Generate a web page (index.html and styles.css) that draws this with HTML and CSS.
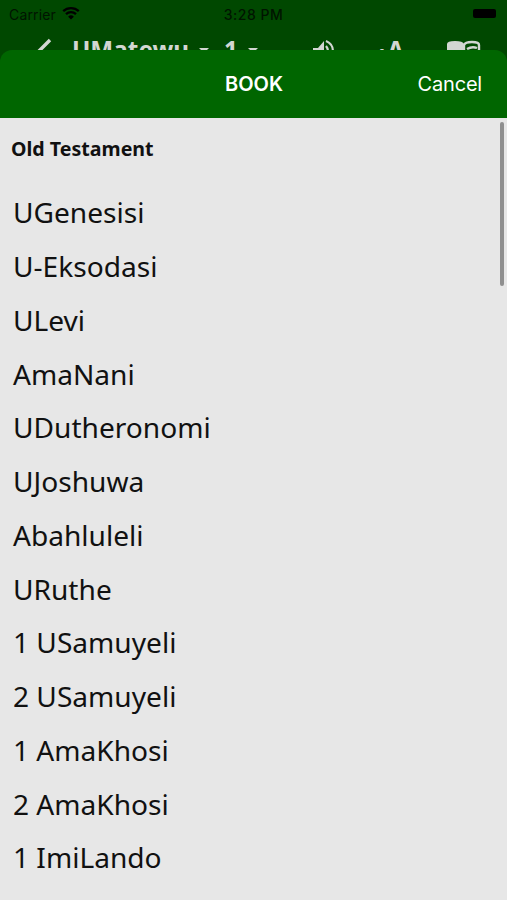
FILE: index.html
```html
<!DOCTYPE html>
<html lang="nd">

<head>
    <meta charset="UTF-8">
    <meta name="viewport" content="width=device-width, initial-scale=1.0">
    <title>Book</title>
    <link rel="stylesheet" href="styles.css">
</head>

<body>

    <div class="status">
        <div class="carrier">
            <span>Carrier</span>
            <svg class="wifi" viewBox="0 0 18 14" width="18" height="14">
                <path d="M1.2 5.2a11.2 11.2 0 0 1 15.6 0M4 8.2a7.2 7.2 0 0 1 10 0" fill="none" stroke="#000" stroke-width="2.3" />
                <path d="M9 13.6L6.1 10.7a4.2 4.2 0 0 1 5.8 0z" />
            </svg>
        </div>
        <span class="time">3:28 PM</span>
        <span class="battery"></span>
    </div>

    <div class="toolbar">
        <svg class="back" viewBox="0 0 16 26" width="16" height="26">
            <path d="M14 2L3 13l11 11" fill="none" stroke="#d2d6d2" stroke-width="3.4" />
        </svg>
        <span class="name">UMatewu</span>
        <span class="arrow"></span>
        <span class="chapter">1</span>
        <span class="arrow"></span>
        <svg class="sound" viewBox="0 0 24 24" width="24" height="24">
            <path d="M1 9v7h5l6 6V2L6 9z" />
            <path d="M14 2q7 3 7 10t-7 10M14 7q4 5 0 10" fill="none" stroke="#d2d6d2" stroke-width="2.2" />
        </svg>
        <span class="size"><small>A</small>A</span>
        <svg class="reader" viewBox="0 0 34 26" width="34" height="26">
            <path d="M0 4q0-3 8-3t9 3v21q-9-5-17 0z" />
            <path d="M17 5q1-3 8-3t7 3v19q-8-4-15 0zM20 9q5-3 10-1M20 15q5-3 10-1" fill="none" stroke="#d2d6d2" stroke-width="2.4" />
        </svg>
    </div>

    <div class="sheet">
        <div class="header">
            <h1>BOOK</h1>
            <button type="button">Cancel</button>
        </div>

        <div class="content">
            <h2>Old Testament</h2>
            <ul class="books">
                <li>UGenesisi</li>
                <li>U-Eksodasi</li>
                <li>ULevi</li>
                <li>AmaNani</li>
                <li>UDutheronomi</li>
                <li>UJoshuwa</li>
                <li>Abahluleli</li>
                <li>URuthe</li>
                <li>1 USamuyeli</li>
                <li>2 USamuyeli</li>
                <li>1 AmaKhosi</li>
                <li>2 AmaKhosi</li>
                <li>1 ImiLando</li>
            </ul>
            <div class="scrollbar"></div>
        </div>
    </div>

</body>

</html>
```

FILE: styles.css
```css
* {
    box-sizing: border-box;
    margin: 0;
    padding: 0;
}

body {
    display: flex;
    flex-direction: column;
    height: 900px;
    overflow: hidden;
    background-color: #004800;
    font-family: "Noto Sans", sans-serif;
}

/* status bar */

.status {
    display: grid;
    grid-template-columns: 1fr auto 1fr;
    align-items: center;
    height: 28px;
    padding: 0 11px 0 9px;
    font-family: Inter, sans-serif;
    font-size: 14px;
    color: #001400;
}

.carrier {
    display: flex;
    align-items: center;
    gap: 6px;
    letter-spacing: 0.15px;
}

.wifi {
    margin-top: -2px;
}

.time {
    font-weight: 500;
    font-size: 14px;
    letter-spacing: 0.5px;
    padding-left: 2px;
}

.battery {
    justify-self: end;
    width: 23px;
    height: 9px;
    margin-top: -1px;
    border-radius: 2px;
    background-color: #000;
}

/* toolbar, half hidden behind the sheet */

.toolbar {
    display: flex;
    align-items: flex-start;
    height: 44px;
    padding: 10px 26px 0 36px;
    color: #d2d6d2;
    fill: #d2d6d2;
    font-size: 24.3px;
    font-weight: bold;
    line-height: 24px;
}

.name {
    margin-left: 20px;
}

.arrow {
    margin: 10px 0 0 10px;
    border: 5px solid transparent;
    border-top-color: #d2d6d2;
    border-bottom: 0;
}

.chapter {
    margin-left: 15px;
}

.sound {
    margin: 1px 0 0 54px;
}

.size {
    margin-left: auto;
}

.size small {
    font-size: 15px;
}

.reader {
    margin: 2px 0 0 43px;
}

/* book sheet */

.sheet {
    flex: 1;
    display: flex;
    flex-direction: column;
    margin-top: -22px;
    overflow: hidden;
    position: relative;
    border-radius: 12px 12px 0 0;
    background-color: #006600;
}

.header {
    display: grid;
    grid-template-columns: 1fr auto 1fr;
    align-items: center;
    height: 68px;
    padding: 0 25px;
    color: #fff;
    font-family: Inter, sans-serif;
}

.header h1 {
    grid-column: 2;
    padding-left: 1px;
    font-size: 20px;
    font-weight: 600;
}

.header button {
    justify-self: end;
    border: none;
    background: none;
    color: #fff;
    font-family: inherit;
    font-size: 20px;
    letter-spacing: -0.2px;
}

.content {
    flex: 1;
    position: relative;
    background-color: #e7e7e7;
}

.content h2 {
    padding: 17px 11px 0;
    font-size: 19.6px;
    line-height: 28px;
    color: #111;
}

.books {
    padding-top: 23.4px;
    list-style: none;
}

.books li {
    height: 53.75px;
    padding-left: 13px;
    font-size: 28.1px;
    line-height: 53.75px;
    color: #111;
}

.scrollbar {
    position: absolute;
    top: 4px;
    right: 3px;
    width: 4px;
    height: 164px;
    border-radius: 2px;
    background-color: #8f8f8f;
}
```
